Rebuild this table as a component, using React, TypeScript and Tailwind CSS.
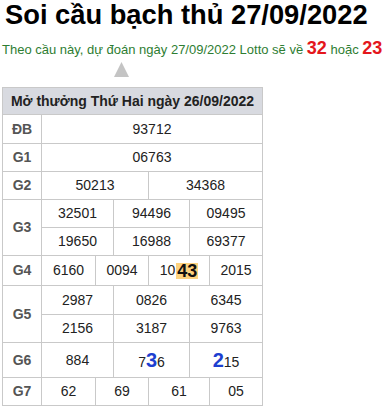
import React from 'react';

const cell = 'flex items-center justify-center border-r border-b border-[#c9c9c9]';

function Label({ text, h }: { text: string; h: string }) {
  return (
    <div className={`${cell} w-[39px] ${h} font-bold text-[#555] text-[14px]`}>{text}</div>
  );
}

export default function App() {
  return (
    <div className="w-[382px] h-[408px] overflow-hidden bg-white font-['Liberation_Sans',Arial,sans-serif] text-[#222]">
      <h1 className="m-0 pl-[5px] text-[27.3px] leading-[30px] font-bold text-black whitespace-nowrap">
        Soi cầu bạch thủ 27/09/2022
      </h1>
      <p className="mt-[8px] pl-[2px] text-[13px] leading-[20px] text-[#2e7d32] whitespace-nowrap">
        Theo cầu này, dự đoán ngày 27/09/2022 Lotto sẽ về{' '}
        <b className="text-[18px] text-[#e4161c]">32</b>{' '}hoặc{' '}
        <b className="text-[18px] text-[#e4161c]">23</b>
      </p>
      <div className="flex pl-[114px] pt-[2px]">
        <svg width="15" height="15" viewBox="0 0 15 15">
          <polygon points="7.5,0 15,15 0,15" fill="#c4c4c4" />
        </svg>
      </div>

      {/* Results table */}
      <div className="ml-[2px] mt-[10px] w-[261px] border-l border-t border-[#c9c9c9] text-[14px]">
        <div className="flex h-[27px] items-center justify-center border-r border-b border-[#c9c9c9] bg-[#d8dae0] font-bold text-[#222] text-[14px]">
          Mở thưởng Thứ Hai ngày 26/09/2022
        </div>
        <div className="flex">
          <Label text="ĐB" h="h-[29px]" />
          <div className={`${cell} flex-1 h-[29px]`}>93712</div>
        </div>
        <div className="flex">
          <Label text="G1" h="h-[28px]" />
          <div className={`${cell} flex-1 h-[28px]`}>06763</div>
        </div>
        <div className="flex">
          <Label text="G2" h="h-[28px]" />
          <div className={`${cell} w-[107px] h-[28px]`}>50213</div>
          <div className={`${cell} flex-1 h-[28px]`}>34368</div>
        </div>
        <div className="flex">
          <Label text="G3" h="h-[56px]" />
          <div className="flex flex-1 flex-col">
            <div className="flex">
              <div className={`${cell} w-[72px] h-[28px]`}>32501</div>
              <div className={`${cell} w-[76px] h-[28px]`}>94496</div>
              <div className={`${cell} flex-1 h-[28px]`}>09495</div>
            </div>
            <div className="flex">
              <div className={`${cell} w-[72px] h-[28px]`}>19650</div>
              <div className={`${cell} w-[76px] h-[28px]`}>16988</div>
              <div className={`${cell} flex-1 h-[28px]`}>69377</div>
            </div>
          </div>
        </div>
        <div className="flex">
          <Label text="G4" h="h-[30px]" />
          <div className={`${cell} w-[54px] h-[30px]`}>6160</div>
          <div className={`${cell} w-[53px] h-[30px]`}>0094</div>
          <div className={`${cell} w-[61px] h-[30px]`}>
            10
            <span className="ml-[1px] bg-[#fdd27e] px-[1px] text-[18px] font-bold leading-[16px] text-[#111]">43</span>
          </div>
          <div className={`${cell} flex-1 h-[30px]`}>2015</div>
        </div>
        <div className="flex">
          <Label text="G5" h="h-[57px]" />
          <div className="flex flex-1 flex-col">
            <div className="flex">
              <div className={`${cell} w-[72px] h-[29px]`}>2987</div>
              <div className={`${cell} w-[76px] h-[29px]`}>0826</div>
              <div className={`${cell} flex-1 h-[29px]`}>6345</div>
            </div>
            <div className="flex">
              <div className={`${cell} w-[72px] h-[28px]`}>2156</div>
              <div className={`${cell} w-[76px] h-[28px]`}>3187</div>
              <div className={`${cell} flex-1 h-[28px]`}>9763</div>
            </div>
          </div>
        </div>
        <div className="flex">
          <Label text="G6" h="h-[35px]" />
          <div className={`${cell} w-[72px] h-[35px]`}>884</div>
          <div className={`${cell} w-[76px] h-[35px]`}>
            <span>
              7<b className="text-[20px] text-[#1d3fd0]">3</b>6
            </span>
          </div>
          <div className={`${cell} flex-1 h-[35px]`}>
            <span>
              <b className="text-[20px] text-[#1d3fd0]">2</b>15
            </span>
          </div>
        </div>
        <div className="flex">
          <Label text="G7" h="h-[28px]" />
          <div className={`${cell} w-[54px] h-[28px]`}>62</div>
          <div className={`${cell} w-[53px] h-[28px]`}>69</div>
          <div className={`${cell} w-[61px] h-[28px]`}>61</div>
          <div className={`${cell} flex-1 h-[28px]`}>05</div>
        </div>
      </div>
    </div>
  );
}
